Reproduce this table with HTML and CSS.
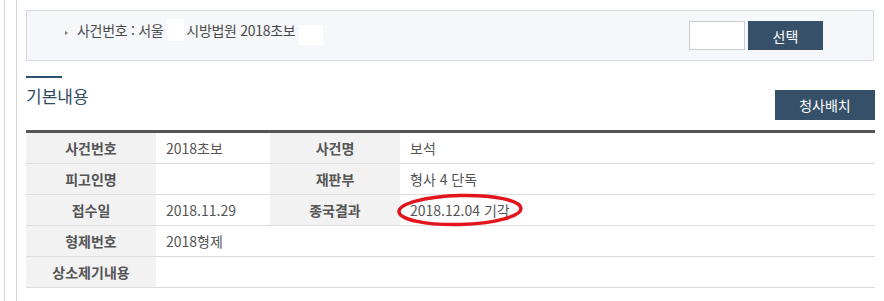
FILE: index.html
```html
<!DOCTYPE html>
<html lang="ko">
<head>
<meta charset="utf-8">
<title>사건 기본내용</title>
<link rel="stylesheet" href="styles.css">
</head>
<body>
<div class="frame-outer">
  <div class="frame-inner">
    <div class="case-box">
      <div class="case-title">
        <span class="bullet"></span>
        <span>사건번호 : 서울</span><span class="redact r1"></span><span>시방법원 2018초보</span><span class="redact r2"></span>
      </div>
      <div class="case-actions">
        <span class="input-box"></span>
        <button class="btn btn-select">선택</button>
      </div>
    </div>

    <div class="section-head">
      <h2 class="section-title">기본내용</h2>
      <button class="btn btn-court">청사배치</button>
    </div>

    <table class="info-table">
      <colgroup>
        <col class="c-label1"><col class="c-val1"><col class="c-label2"><col>
      </colgroup>
      <tr>
        <th>사건번호</th><td>2018초보</td><th>사건명</th><td>보석</td>
      </tr>
      <tr>
        <th>피고인명</th><td></td><th>재판부</th><td>형사 4 단독</td>
      </tr>
      <tr>
        <th>접수일</th><td>2018.11.29</td><th>종국결과</th>
        <td class="result-cell"><span class="result">2018.12.04 기각</span>
          <svg class="circle-mark" width="130" height="36" viewBox="0 0 130 36"><ellipse cx="64" cy="18" rx="61" ry="14.5" fill="none" stroke="#e3141c" stroke-width="3.5" transform="rotate(-1.5 64 18)"/></svg>
        </td>
      </tr>
      <tr>
        <th>형제번호</th><td colspan="3">2018형제</td>
      </tr>
      <tr>
        <th>상소제기내용</th><td colspan="3"></td>
      </tr>
    </table>
  </div>
</div>
</body>
</html>
```
FILE: styles.css
```css
html, body {
  margin: 0;
  padding: 0;
  background: #fff;
}
body {
  font-family: "Noto Sans CJK KR", "Noto Sans", sans-serif;
  color: #555;
  font-size: 14px;
}
.frame-outer {
  margin-left: 4px;
  border-left: 1px solid #d4d4d4;
  padding-left: 11px;
  min-height: 301px;
}
.frame-inner {
  border-left: 1px solid #d4d4d4;
  padding-left: 9px;
  padding-right: 9px;
  min-height: 301px;
  padding-top: 10px;
}
.case-box {
  height: 49px;
  border: 1px solid #d6d9dd;
  background: #f5f7fa;
  display: flex;
  align-items: center;
  justify-content: space-between;
  padding: 0 50px 0 38px;
  margin-right: 1px;
}
.case-title {
  display: flex;
  align-items: center;
  font-size: 14px;
  color: #4a4a4a;
  letter-spacing: -0.3px;
  margin-top: -12px;
}
.bullet {
  width: 0;
  height: 0;
  border-left: 3px solid #777;
  border-top: 2.5px solid transparent;
  border-bottom: 2.5px solid transparent;
  margin-right: 9px;
  margin-top: 6px;
}
.redact {
  display: inline-block;
  background: #fff;
}
.r1 { width: 17px; height: 22px; margin: 0 2px 0 4px; }
.r2 { width: 24px; height: 20px; margin: 10px 0 0 4px; }
.case-actions {
  display: flex;
  gap: 3px;
  margin-top: 0;
}
.input-box {
  width: 54px;
  height: 27px;
  background: #fff;
  border: 1px solid #ccc;
}
.btn {
  border: 0;
  background: #37506a;
  color: #fff;
  font-family: inherit;
  font-size: 14px;
  padding: 0;
  cursor: pointer;
}
.btn-select {
  width: 75px;
  height: 29px;
}
.section-head {
  display: flex;
  justify-content: space-between;
  align-items: flex-end;
  margin-top: 15px;
}
.section-title {
  margin: 0;
  font-size: 17px;
  font-weight: normal;
  color: #2e4b62;
  border-top: 2px solid #2d5170;
  padding-top: 6px;
  width: 36px;
  white-space: nowrap;
  line-height: 24px;
  margin-bottom: 12px;
}
.btn-court {
  width: 100px;
  height: 30px;
  font-size: 14px;
}
.info-table {
  width: 849px;
  border-collapse: collapse;
  border-top: 3px solid #555;
  margin-top: 10px;
  table-layout: fixed;
}
.c-label1 { width: 130px; }
.c-val1 { width: 114px; }
.c-label2 { width: 130px; }
.info-table th,
.info-table td {
  height: 30px;
  padding: 0 10px;
  border-bottom: 1px solid #ddd;
  font-size: 14px;
  line-height: 20px;
  text-align: left;
  color: #555;
}
.info-table th {
  background: #f2f2f2;
  text-align: center;
  font-weight: bold;
  color: #555;
  padding: 0;
}
.result-cell {
  position: relative;
}
.circle-mark {
  position: absolute;
  left: -4px;
  top: -3px;
}
```
